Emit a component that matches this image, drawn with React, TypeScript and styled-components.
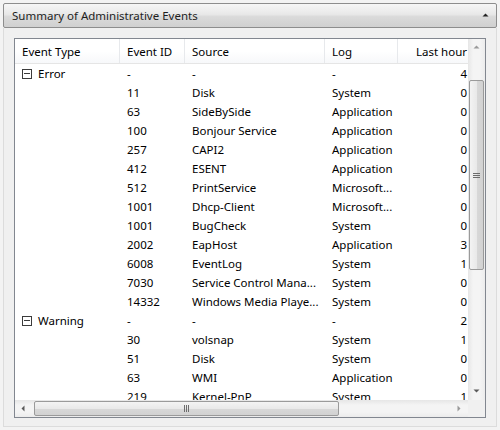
import React from 'react';
import styled, { createGlobalStyle } from 'styled-components';

const GlobalStyle = createGlobalStyle`
  html, body {
    margin: 0;
    padding: 0;
    background: #f3f3f3;
  }
  body {
    font-family: 'Noto Sans', 'Open Sans', sans-serif;
    font-size: 11.5px;
    color: #000;
  }
`;

const Window = styled.div`
  width: 500px;
  height: 430px;
  box-sizing: border-box;
  padding: 3px;
  display: flex;
  flex-direction: column;
`;

const Panel = styled.div`
  flex: 1;
  display: flex;
  flex-direction: column;
  border: 1px solid #dcdcdc;
  border-top: none;
  background: #f0f0f0;
`;

const TitleBar = styled.div`
  height: 25px;
  box-sizing: border-box;
  display: flex;
  align-items: center;
  justify-content: space-between;
  padding: 0 7px 0 8px;
  border: 1px solid #8d8d8d;
  border-radius: 2px;
  background: linear-gradient(#f6f6f6, #e8e8e8 45%, #dadada 55%, #d0d0d0);
  color: #1e1e1e;
  font-size: 11.5px;
`;

const Body = styled.div`
  flex: 1;
  padding: 10px 10px 8px 10px;
  display: flex;
`;

const ListView = styled.div`
  width: 474px;
  height: 380px;
  box-sizing: border-box;
  border: 1px solid #828790;
  background: #fff;
  display: grid;
  grid-template-columns: 1fr 17px;
  grid-template-rows: 1fr 17px;
`;

const Content = styled.div`
  overflow: hidden;
  display: flex;
  flex-direction: column;
`;

const cols = '105px 65px 140px 73px 72px';

const HeaderRow = styled.div`
  display: grid;
  grid-template-columns: ${cols};
  height: 25px;
  flex: none;
  box-sizing: border-box;
  border-bottom: 1px solid #e5e5e5;
  background: linear-gradient(#ffffff, #ffffff 50%, #f7f8fa);
`;

const HeaderCell = styled.div<{ $right?: boolean }>`
  display: flex;
  align-items: center;
  justify-content: ${(p) => (p.$right ? 'flex-end' : 'flex-start')};
  padding: ${(p) => (p.$right ? '0 3px 0 0' : '0 0 0 7px')};
  border-right: 1px solid #e7e9ec;
  white-space: nowrap;
  overflow: hidden;
  &:last-child {
    border-right: none;
  }
`;

const Rows = styled.div``;

const Row = styled.div`
  display: grid;
  grid-template-columns: ${cols};
  height: 19px;
`;

const Cell = styled.div<{ $right?: boolean }>`
  display: flex;
  align-items: center;
  justify-content: ${(p) => (p.$right ? 'flex-end' : 'flex-start')};
  padding: ${(p) => (p.$right ? '0 3px 0 0' : '0 0 0 7px')};
  white-space: nowrap;
  overflow: hidden;
`;

const GroupCell = styled(Cell)`
  gap: 6px;
`;

const Expander = styled.span`
  width: 10px;
  height: 10px;
  box-sizing: border-box;
  border: 1px solid #3c3c3c;
  position: relative;
  flex: none;
  &::after {
    content: '';
    position: absolute;
    left: 1px;
    right: 1px;
    top: 3.5px;
    height: 1px;
    background: #3c3c3c;
  }
`;

const ScrollV = styled.div`
  display: flex;
  flex-direction: column;
  background: linear-gradient(90deg, #e6e6e6, #f4f4f4 30%, #f4f4f4 70%, #ececec);
`;

const ScrollH = styled.div`
  display: flex;
  background: linear-gradient(#e6e6e6, #f4f4f4 30%, #f4f4f4 70%, #ececec);
`;

const Corner = styled.div`
  background: #f0f0f0;
`;

const ArrowBtn = styled.div`
  width: 17px;
  height: 17px;
  flex: none;
  display: flex;
  align-items: center;
  justify-content: center;
`;

const Track = styled.div<{ $vertical?: boolean }>`
  flex: 1;
  display: flex;
  flex-direction: ${(p) => (p.$vertical ? 'column' : 'row')};
`;

const Thumb = styled.div<{ $vertical?: boolean }>`
  box-sizing: border-box;
  border: 1px solid #9a9a9a;
  border-radius: 2px;
  display: flex;
  align-items: center;
  justify-content: center;
  background: ${(p) =>
    p.$vertical
      ? 'linear-gradient(90deg, #f3f3f3, #e9e9e9 50%, #d8d8d8 51%, #d2d2d2)'
      : 'linear-gradient(#f3f3f3, #e9e9e9 50%, #d8d8d8 51%, #d2d2d2)'};
  ${(p) => (p.$vertical ? 'margin: 0 1px 0 1px;' : 'margin: 1px 0;')}
`;

const Spacer = styled.div<{ $size: number }>`
  flex: none;
  width: ${(p) => p.$size}px;
  height: ${(p) => p.$size}px;
`;

const Grip = ({ vertical }: { vertical?: boolean }) =>
  vertical ? (
    <svg width="7" height="7" viewBox="0 0 7 7">
      <path d="M0 1.5h7M0 3.5h7M0 5.5h7" stroke="#6d6d6d" strokeWidth="1" />
    </svg>
  ) : (
    <svg width="7" height="7" viewBox="0 0 7 7">
      <path d="M1.5 0v7M3.5 0v7M5.5 0v7" stroke="#6d6d6d" strokeWidth="1" />
    </svg>
  );

const Tri = ({ dir, color = '#5a5a5a' }: { dir: 'up' | 'down' | 'left' | 'right'; color?: string }) => {
  const d = {
    up: 'M0.5 4.5 L3.5 1.5 L6.5 4.5 Z',
    down: 'M0.5 1.5 L3.5 4.5 L6.5 1.5 Z',
    left: 'M4.5 0.5 L1.5 3.5 L4.5 6.5 Z',
    right: 'M1.5 0.5 L4.5 3.5 L1.5 6.5 Z',
  }[dir];
  return (
    <svg width="7" height="7" viewBox="0 0 7 7">
      <path d={d} fill={color} />
    </svg>
  );
};

type Entry = { id: string; source: string; log: string; hour: string };
type Group = { type: string; hour: string; items: Entry[] };

const groups: Group[] = [
  {
    type: 'Error',
    hour: '4',
    items: [
      { id: '11', source: 'Disk', log: 'System', hour: '0' },
      { id: '63', source: 'SideBySide', log: 'Application', hour: '0' },
      { id: '100', source: 'Bonjour Service', log: 'Application', hour: '0' },
      { id: '257', source: 'CAPI2', log: 'Application', hour: '0' },
      { id: '412', source: 'ESENT', log: 'Application', hour: '0' },
      { id: '512', source: 'PrintService', log: 'Microsoft...', hour: '0' },
      { id: '1001', source: 'Dhcp-Client', log: 'Microsoft...', hour: '0' },
      { id: '1001', source: 'BugCheck', log: 'System', hour: '0' },
      { id: '2002', source: 'EapHost', log: 'Application', hour: '3' },
      { id: '6008', source: 'EventLog', log: 'System', hour: '1' },
      { id: '7030', source: 'Service Control Mana...', log: 'System', hour: '0' },
      { id: '14332', source: 'Windows Media Playe...', log: 'System', hour: '0' },
    ],
  },
  {
    type: 'Warning',
    hour: '2',
    items: [
      { id: '30', source: 'volsnap', log: 'System', hour: '1' },
      { id: '51', source: 'Disk', log: 'System', hour: '0' },
      { id: '63', source: 'WMI', log: 'Application', hour: '0' },
      { id: '219', source: 'Kernel-PnP', log: 'System', hour: '1' },
    ],
  },
];

export default function App() {
  return (
    <Window>
      <GlobalStyle />
      <TitleBar>
        <span>Summary of Administrative Events</span>
        <Tri dir="up" color="#222" />
      </TitleBar>
      <Panel>
        <Body>
          <ListView>
            <Content>
              <HeaderRow>
                <HeaderCell>Event Type</HeaderCell>
                <HeaderCell>Event ID</HeaderCell>
                <HeaderCell>Source</HeaderCell>
                <HeaderCell>Log</HeaderCell>
                <HeaderCell $right>Last hour</HeaderCell>
              </HeaderRow>
              <Rows>
                {groups.map((g) => (
                  <React.Fragment key={g.type}>
                    <Row>
                      <GroupCell>
                        <Expander />
                        {g.type}
                      </GroupCell>
                      <Cell>-</Cell>
                      <Cell>-</Cell>
                      <Cell>-</Cell>
                      <Cell $right>{g.hour}</Cell>
                    </Row>
                    {g.items.map((e, i) => (
                      <Row key={i}>
                        <Cell />
                        <Cell>{e.id}</Cell>
                        <Cell>{e.source}</Cell>
                        <Cell>{e.log}</Cell>
                        <Cell $right>{e.hour}</Cell>
                      </Row>
                    ))}
                  </React.Fragment>
                ))}
              </Rows>
            </Content>
            <ScrollV>
              <ArrowBtn>
                <Tri dir="up" color="#9a9a9a" />
              </ArrowBtn>
              <Track $vertical>
                <Spacer $size={24} />
                <Thumb $vertical style={{ height: 190 }}>
                  <Grip vertical />
                </Thumb>
              </Track>
              <ArrowBtn>
                <Tri dir="down" color="#5a5a5a" />
              </ArrowBtn>
            </ScrollV>
            <ScrollH>
              <ArrowBtn>
                <Tri dir="left" color="#5a5a5a" />
              </ArrowBtn>
              <Track>
                <Spacer $size={2} />
                <Thumb style={{ width: 305 }}>
                  <Grip />
                </Thumb>
              </Track>
              <ArrowBtn>
                <Tri dir="right" color="#9a9a9a" />
              </ArrowBtn>
            </ScrollH>
            <Corner />
          </ListView>
        </Body>
      </Panel>
    </Window>
  );
}
